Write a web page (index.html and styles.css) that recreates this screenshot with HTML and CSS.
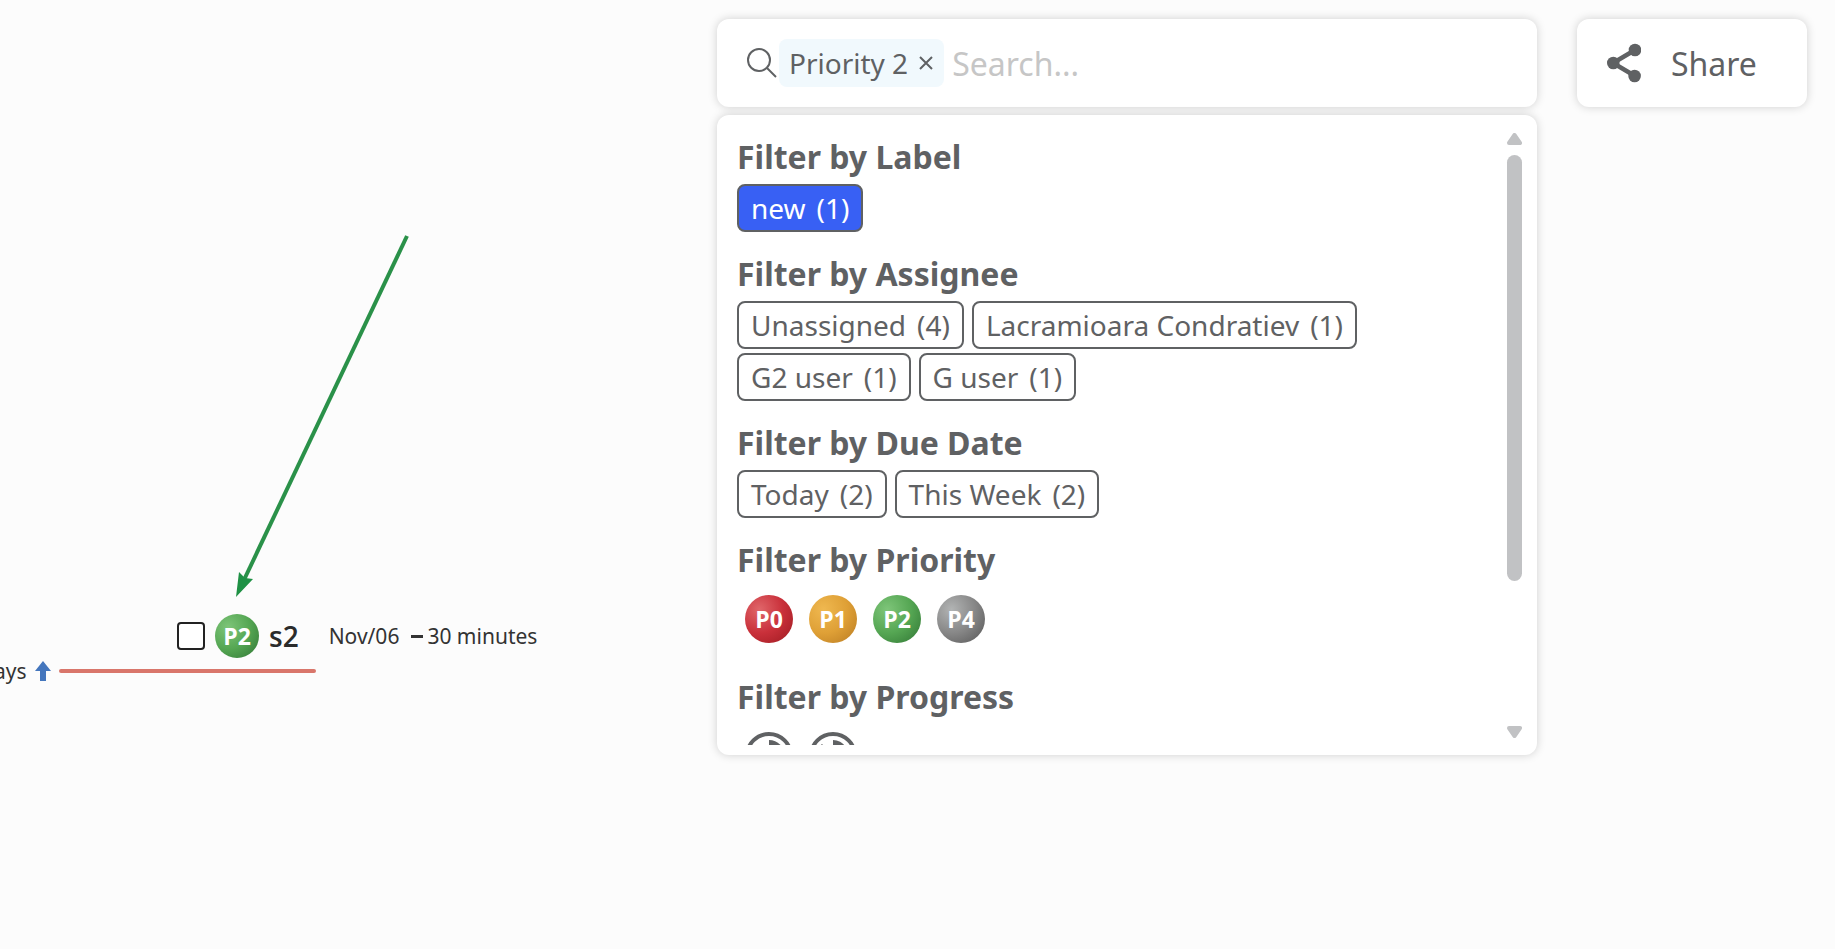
FILE: index.html
```
<!DOCTYPE html>
<html lang="en">
<head>
    <meta charset="UTF-8">
    <meta name="viewport" content="width=device-width, initial-scale=1.0">
    <title>Mind Map - Filter</title>
    <link rel="stylesheet" href="styles.css">
</head>
<body>
    <!-- Map canvas -->
    <main class="canvas">
        <svg class="relation" width="180" height="370" viewBox="0 0 180 370" aria-hidden="true">
            <path d="M177 6 L13 352" stroke="#2a9149" stroke-width="4" fill="none" />
            <path d="M6 367 L9 342 L15 348 L23 349 Z" fill="#1f9145" />
        </svg>

        <div class="topic">
            <input type="checkbox" class="topic-check" aria-label="Complete s2">
            <span class="ball ball-small p2">P2</span>
            <span class="topic-title">s2</span>
            <span class="topic-info"><span>Nov/06</span><span class="dash"></span><span>30 minutes</span></span>
        </div>

        <div class="branch">
            <span>ays</span>
            <svg width="16" height="20" viewBox="0 0 16 20" aria-hidden="true">
                <path d="M8 0 L16 10 H11 V20 H5 V10 H0 Z" fill="#4476bd" />
            </svg>
            <span class="branch-line"></span>
        </div>
    </main>

    <!-- Toolbar -->
    <header class="toolbar">
        <div class="search">
            <div class="panel search-bar">
                <svg width="32" height="32" viewBox="0 0 32 32" fill="none" stroke="#5f6163" stroke-width="2" aria-hidden="true">
                    <circle cx="12" cy="13" r="11" />
                    <path d="M20 21 L29 30" />
                </svg>
                <span class="tag">Priority 2
                    <button type="button" class="tag-remove" aria-label="Remove Priority 2">
                        <svg width="14" height="14" viewBox="0 0 14 14" stroke="#5f6163" stroke-width="2"><path d="M1 1 L13 13 M13 1 L1 13" /></svg>
                    </button>
                </span>
                <input type="text" class="search-input" placeholder="Search..." aria-label="Search">
            </div>

            <div class="panel filters">
                <div class="filter-list">
                    <section class="filter">
                        <h2>Filter by Label</h2>
                        <div class="chips">
                            <button type="button" class="chip chip-new">new <span>(1)</span></button>
                        </div>
                    </section>
                    <section class="filter">
                        <h2>Filter by Assignee</h2>
                        <div class="chips">
                            <button type="button" class="chip">Unassigned <span>(4)</span></button>
                            <button type="button" class="chip">Lacramioara Condratiev <span>(1)</span></button>
                            <button type="button" class="chip">G2 user <span>(1)</span></button>
                            <button type="button" class="chip">G user <span>(1)</span></button>
                        </div>
                    </section>
                    <section class="filter">
                        <h2>Filter by Due Date</h2>
                        <div class="chips">
                            <button type="button" class="chip">Today <span>(2)</span></button>
                            <button type="button" class="chip">This Week <span>(2)</span></button>
                        </div>
                    </section>
                    <section class="filter">
                        <h2>Filter by Priority</h2>
                        <div class="balls">
                            <button type="button" class="ball p0">P0</button>
                            <button type="button" class="ball p1">P1</button>
                            <button type="button" class="ball p2">P2</button>
                            <button type="button" class="ball p4">P4</button>
                        </div>
                    </section>
                    <section class="filter">
                        <h2>Filter by Progress</h2>
                        <div class="balls">
                            <button type="button" class="progress" aria-label="25% done">
                                <svg width="48" height="48" viewBox="0 0 48 48">
                                    <circle cx="24" cy="24" r="22" fill="none" stroke="#5f6163" stroke-width="4" />
                                    <path d="M24 24 V8 A16 16 0 0 1 40 24 Z" fill="#5f6163" />
                                </svg>
                            </button>
                            <button type="button" class="progress" aria-label="88% done">
                                <svg width="48" height="48" viewBox="0 0 48 48">
                                    <circle cx="24" cy="24" r="22" fill="none" stroke="#5f6163" stroke-width="4" />
                                    <path d="M24 24 V8 A16 16 0 1 1 13 12 Z" fill="#5f6163" />
                                </svg>
                            </button>
                        </div>
                    </section>
                </div>
                <div class="scrollbar" aria-hidden="true">
                    <svg width="15" height="12" viewBox="0 0 15 12"><path d="M7.5 2 L13 10 H2 Z" /></svg>
                    <div class="track"><div class="thumb"></div></div>
                    <svg width="15" height="12" viewBox="0 0 15 12"><path d="M7.5 10 L13 2 H2 Z" /></svg>
                </div>
            </div>
        </div>

        <button type="button" class="panel share">
            <svg width="34" height="40" viewBox="0 0 34 40" fill="#5f6163" aria-hidden="true">
                <path d="M28 7 L6 20 L28 33" fill="none" stroke="#5f6163" stroke-width="4.5" />
                <circle cx="28" cy="7" r="6.3" />
                <circle cx="6.3" cy="20" r="6.3" />
                <circle cx="27.6" cy="33" r="6.3" />
            </svg>
            Share
        </button>
    </header>
</body>
</html>
```
FILE: styles.css
```
* {
    margin: 0;
    padding: 0;
    box-sizing: border-box;
}

body {
    min-height: 100vh;
    font-family: "Noto Sans", sans-serif;
    color: #5f6163;
    background: #fcfcfc;
    overflow: hidden;
}

button {
    font: inherit;
    color: inherit;
    background: none;
    border: 0;
    cursor: pointer;
}

/* Map canvas */
.canvas {
    position: absolute;
    inset: 0;
    overflow: hidden;
    color: #333;
    font-size: 21px;
}

.relation {
    position: absolute;
    left: 230px;
    top: 230px;
}

.topic {
    position: absolute;
    left: 177px;
    top: 614px;
    display: flex;
    align-items: center;
    white-space: nowrap;
}

.topic-check {
    appearance: none;
    width: 28px;
    height: 28px;
    margin-right: 10px;
    border: 2px solid #222;
    border-radius: 4px;
    background: #fff;
}

.topic-title {
    margin-left: 10px;
    font-family: "Open Sans", sans-serif;
    font-size: 28px;
    font-weight: 600;
    line-height: 44px;
    color: #2b2b2b;
}

.topic-info {
    display: flex;
    align-items: center;
    margin-left: 30px;
}

.dash {
    width: 12px;
    height: 3px;
    margin: 0 4px 0 12px;
    background: #333;
}

.branch {
    position: absolute;
    left: -6px;
    top: 656px;
    display: flex;
    align-items: center;
    line-height: 30px;
}

.branch svg {
    margin: 0 8px;
}

.branch-line {
    width: 257px;
    height: 4px;
    border-radius: 2px;
    background: #d9766b;
}

/* Toolbar */
.toolbar {
    position: relative;
    display: flex;
    justify-content: flex-end;
    align-items: flex-start;
    gap: 40px;
    padding: 19px 28px;
}

.panel {
    background: #fff;
    border-radius: 12px;
    box-shadow: 0 0 10px rgba(0, 0, 0, 0.18);
}

.search {
    display: flex;
    flex-direction: column;
    gap: 8px;
    width: 820px;
}

.search-bar {
    display: flex;
    align-items: center;
    height: 88px;
    padding: 0 30px;
}

.tag {
    display: flex;
    align-items: center;
    gap: 11px;
    height: 48px;
    padding: 0 11px 0 10px;
    border-radius: 8px;
    background: #f1f9fd;
    font-size: 28px;
    white-space: nowrap;
}

.tag-remove {
    display: flex;
}

.search-input {
    flex: 1;
    min-width: 0;
    margin-left: 8px;
    border: 0;
    outline: 0;
    background: none;
    color: inherit;
    font: inherit;
    font-size: 32px;
}

.search-input::placeholder {
    color: #c6c6c6;
}

.share {
    display: flex;
    align-items: center;
    gap: 30px;
    width: 230px;
    height: 88px;
    padding: 0 30px;
    font-size: 32px;
}

/* Filter dropdown */
.filters {
    display: flex;
    height: 640px;
    padding: 10px 15px 10px 20px;
}

.filter-list {
    flex: 1;
    overflow-y: auto;
    scrollbar-width: none;
    padding-top: 10px;
}

.filter {
    margin-bottom: 20px;
}

.filter h2 {
    margin-bottom: 5px;
    font-size: 32px;
    line-height: 44px;
}

.chips {
    display: flex;
    flex-wrap: wrap;
    gap: 4px 8px;
}

.chip {
    display: flex;
    align-items: center;
    gap: 11px;
    height: 48px;
    padding: 0 12px;
    border: 2px solid #5f6163;
    border-radius: 8px;
    font-size: 28px;
}

.chip-new {
    background: #3860f4;
    color: #fff;
}

.balls {
    display: flex;
    gap: 16px;
    padding: 8px 8px 12px;
}

.ball {
    display: flex;
    justify-content: center;
    align-items: center;
    width: 48px;
    height: 48px;
    border-radius: 50%;
    color: #fff;
    font-family: "Open Sans", sans-serif;
    font-size: 23px;
    font-weight: 700;
}

.ball-small {
    width: 44px;
    height: 44px;
}

.p0 { background: radial-gradient(circle at 30% 30%, #e0666a, #c9303a 50%, #9c1a20); }
.p1 { background: radial-gradient(circle at 30% 30%, #efb850, #dfa036 50%, #b87a22); }
.p2 { background: radial-gradient(circle at 30% 30%, #7ec579, #55a653 50%, #2f7433); }
.p4 { background: radial-gradient(circle at 30% 30%, #b2b4b4, #878787 50%, #545454); }

.progress {
    width: 48px;
    height: 48px;
}

.scrollbar {
    display: flex;
    flex-direction: column;
    gap: 10px;
    width: 15px;
    padding: 8px 0 7px;
}

.scrollbar path {
    fill: #c1c2c4;
    stroke: #c1c2c4;
    stroke-width: 4;
    stroke-linejoin: round;
}

.track {
    flex: 1;
}

.thumb {
    height: 76%;
    border-radius: 8px;
    background: #c1c2c4;
}
```
